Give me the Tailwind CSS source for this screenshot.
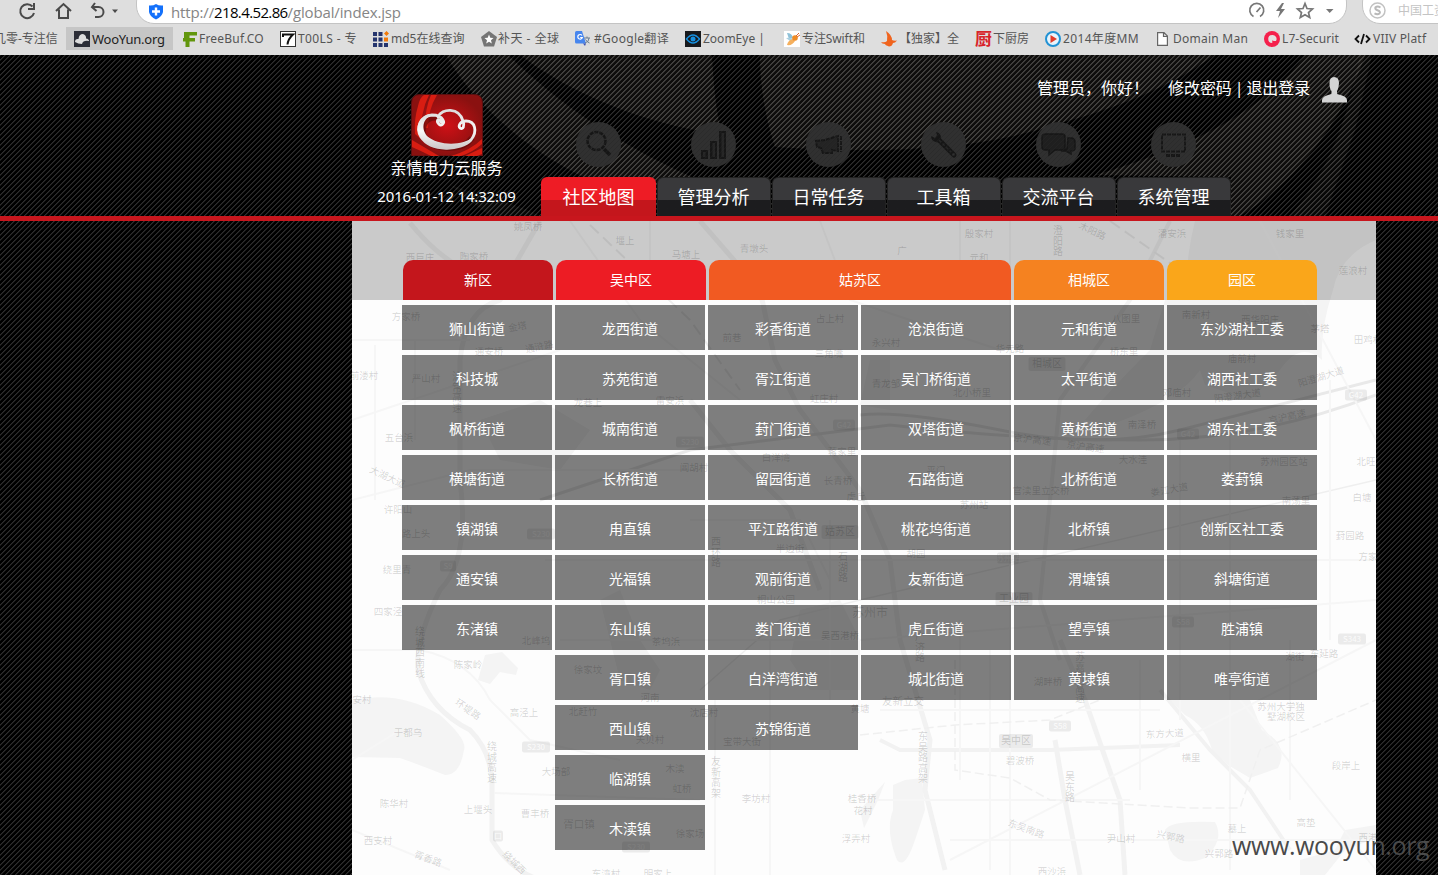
<!DOCTYPE html>
<html lang="zh-CN">
<head>
<meta charset="utf-8">
<title>亲情电力云服务</title>
<script src="https://cdn.jsdelivr.net/npm/@tailwindcss/browser@4"></script>
</head>
<body class="relative w-[1438px] h-[875px] overflow-hidden bg-black font-['Noto_Sans','Noto_Sans_CJK_SC',sans-serif] flex flex-col">

<!-- striped backdrop -->
<svg class="absolute left-0 top-[55px]" width="1438" height="820">
  <defs>
    <pattern id="stripe" width="5" height="5" patternUnits="userSpaceOnUse">
      <g fill="#2e2e2e" shape-rendering="crispEdges">
        <rect x="4" y="0" width="1" height="1"/><rect x="3" y="1" width="1" height="1"/><rect x="2" y="2" width="1" height="1"/><rect x="1" y="3" width="1" height="1"/><rect x="0" y="4" width="1" height="1"/>
      </g>
      <g fill="#1a1a1a" shape-rendering="crispEdges">
        <rect x="0" y="0" width="1" height="1"/><rect x="4" y="1" width="1" height="1"/><rect x="3" y="2" width="1" height="1"/><rect x="2" y="3" width="1" height="1"/><rect x="1" y="4" width="1" height="1"/>
      </g>
    </pattern>
    <pattern id="glow" width="5" height="5" patternUnits="userSpaceOnUse">
      <rect width="5" height="5" fill="#8a867c" fill-opacity=".1"/>
      <g fill="#b4b0a6" fill-opacity=".11" shape-rendering="crispEdges">
        <rect x="4" y="0" width="1" height="1"/><rect x="3" y="1" width="1" height="1"/><rect x="2" y="2" width="1" height="1"/><rect x="1" y="3" width="1" height="1"/><rect x="0" y="4" width="1" height="1"/>
        <rect x="0" y="0" width="1" height="1"/><rect x="4" y="1" width="1" height="1"/><rect x="3" y="2" width="1" height="1"/><rect x="2" y="3" width="1" height="1"/><rect x="1" y="4" width="1" height="1"/>
      </g>
    </pattern>
  </defs>
  <rect width="1438" height="820" fill="url(#stripe)"/>
  <g fill="url(#glow)">
    <path d="M446 0H508C560 50 620 90 692 122V160H690C560 130 480 60 446 0Z"/>
    <path d="M520 0H712C714 40 718 65 722 80L690 74C620 60 560 30 520 0Z"/>
    <path d="M760 0H1215C1180 25 1130 50 1060 68C990 92 900 100 775 92C765 62 760 30 760 0Z"/>
    <path d="M1095 120C1200 90 1270 50 1305 0H1365C1345 60 1300 125 1240 161H1231V122Z"/>
    <path d="M1372 0L1355 75L1325 161H1290C1335 110 1350 50 1360 0Z" opacity=".6"/>
    <path d="M450 130C480 140 520 150 540 161H490Z" opacity=".5"/>
  </g>
</svg>

<!-- browser chrome -->
<div class="relative h-[55px] shrink-0 bg-[#dedede] flex flex-col overflow-hidden">
  <div class="h-6 shrink-0 flex">
    <div class="w-[136px] shrink-0 flex">
      <svg width="136" height="24" fill="none" stroke="#4a4a4a" stroke-width="2">
        <path d="M32.5 6.5A7 7 0 1 0 34 13"/><path d="M34 3V9H28" />
        <path d="M56 11L63.500 4L71 11M59 9.500V18H68V9.500"/>
        <path d="M95 3L92 7L96.500 11M92 7H98.500A5 5 0 0 1 98.500 17H95"/>
        <path d="M112 9.500H118L115 13Z" fill="#4a4a4a" stroke="none"/>
      </svg>
    </div>
    <div class="-mt-4 h-10 w-[1211px] shrink-0 rounded-[18px] bg-white border border-[#c4c4c4] pt-4 flex items-center">
      <svg class="ml-[11px] shrink-0" width="16" height="18"><path d="M8 1Q11 3 15 2.500V9Q14 14 8 16.500Q2 14 1 9V2.500Q5 3 8 1Z" fill="#1471fb"/><path d="M8 4.500V12.500M4 8.500H12" stroke="#fff" stroke-width="2.400"/></svg>
      <div class="ml-[7px] w-[1077px] text-[15px] leading-6 tracking-[-0.14px] text-[#858585] whitespace-nowrap font-['Open_Sans',sans-serif]">http://<span class="text-black tracking-[-0.63px]">218.4.52.86</span>/global/index.jsp</div>
      <svg class="shrink-0" width="90" height="24" fill="none" stroke="#777" stroke-width="1.700">
        <path d="M5.500 16.500A7 7 0 1 1 12 16.500M8.500 12L12.500 7.500"/>
        <path d="M34 3L28 11H32L30 18L37 9H33L36 3Z" fill="#777" stroke="none"/>
        <path d="M57 3.500L59 8.500L64.500 9L60.500 12.500L61.700 17.500L57 14.700L52.300 17.500L53.500 12.500L49.500 9L55 8.500Z"/>
        <path d="M78 9H85.500L81.700 13Z" fill="#777" stroke="none"/>
      </svg>
    </div>
    <div class="ml-[15px] -mt-4 h-10 w-[120px] shrink-0 rounded-[18px] bg-white border border-[#c4c4c4] pt-4 flex items-center">
      <svg class="ml-1.5 -mt-1 shrink-0" width="17" height="17"><circle cx="8.500" cy="8.500" r="7.500" fill="none" stroke="#c2c2c2" stroke-width="1.500"/><path d="M11.500 5.500Q8.500 3.800 6.500 5.300Q5.500 7 8.500 8.200Q12 9.500 10.500 11.500Q8.500 13 5.500 11.300" fill="none" stroke="#b9b9b9" stroke-width="2"/></svg>
      <span class="ml-3 -mt-0.5 text-[12px] text-[#c4c4c4] whitespace-nowrap leading-5">中国工资</span>
    </div>
  </div>
  <div class="relative h-[31px] flex text-[12px] leading-[24px] pt-[3px] text-[#555] whitespace-nowrap">
    <div class="w-[66px] shrink-0 h-6"><div class="-ml-1.5">几零-专注信</div></div>
    <div class="w-[107px] shrink-0 h-[23px] bg-[#c6c6c6] flex items-center pl-2 text-[#222]">
      <svg class="mr-0.5 shrink-0" width="16" height="16"><rect width="16" height="16" fill="#2b2d36"/><path d="M1 11Q1 7.500 4.500 8Q5 3 9 3Q12.500 4 12 7.500Q15 8 15 10Q9 9 8 13Q4 13 1 11Z" fill="#ddd"/></svg><span class="text-[13px] tracking-[-0.25px]">WooYun.org</span></div>
    <div class="w-[99px] shrink-0 pl-2.5 flex h-[23px] items-center"><svg class="mr-0.5 shrink-0" width="14" height="16"><path d="M1 1H14V4.500H6.500V7H12V10.500H6.500V16H2.500V10.500H0V7H1Z" fill="#62960d"/></svg><span class="tracking-[0.2px]">FreeBuf.CO</span></div>
    <div class="w-[93px] shrink-0 pl-2 flex h-[23px] items-center"><svg class="mr-0.5 shrink-0" width="16" height="16"><rect x=".5" y=".5" width="15" height="15" fill="#fff" stroke="#333"/><path d="M3 6V3.500H13Q8 8 7.500 13.500" fill="none" stroke="#111" stroke-width="2"/></svg><span class="tracking-[0.4px]">T00LS - 专</span></div>
    <div class="w-[108px] shrink-0 pl-2 flex h-[23px] items-center"><svg class="mr-0.5 shrink-0" width="16" height="16"><g fill="#25356e"><path d="M0 1h4v4H0zM5.500 1h4v4h-4zM0 6.500h4v4H0zM5.500 6.500h4v4h-4zM0 12h4v4H0zM5.500 12h4v4h-4zM11 12h4v4h-4z"/></g><path d="M11 6.500h4v4h-4zM13.500 0l2.500 2.500-2.500 2.500L11 2.500z" fill="#f27a0a"/></svg>md5在线查询</div>
    <div class="w-[94px] shrink-0 pl-2 flex h-[23px] items-center"><svg class="mr-px shrink-0" width="16" height="16"><path d="M8 0L16 6L13 15.500H3L0 6Z" fill="#757575"/><path d="M8 3.500L9.300 6.700L12.500 7L10 9.200L10.800 12.500L8 10.800L5.200 12.500L6 9.200L3.500 7L6.700 6.700Z" fill="#fff"/></svg><span class="tracking-[0.5px]">补天 - 全球</span></div>
    <div class="w-[109px] shrink-0 pl-2 flex h-[23px] items-center"><svg class="mr-[3px] shrink-0" width="16" height="16"><path d="M6 4H15V14.500H10Z" fill="#dcdcdc"/><path d="M0 1.500Q0 0 1.500 0H7L11 12.500H1.500Q0 12.500 0 11Z" fill="#4786ee"/><path d="M7 4.500A2.300 2.300 0 1 0 7.300 6.500H5.200" fill="none" stroke="#fff" stroke-width="1.200"/><path d="M9 7H15M12 5.500V7M10 12Q14 11 14 7M10.500 8.500Q12 11 14.500 12" fill="none" stroke="#6b7f92"/><path d="M8 12.500h3L10 15z" fill="#3b4fb0"/></svg><span class="tracking-[0.3px]">#Google翻译</span></div>
    <div class="w-[100px] shrink-0 pl-[9px] flex h-[23px] items-center"><svg class="mr-0.5 shrink-0" width="16" height="16"><rect width="16" height="16" fill="#17191d"/><path d="M1.500 8Q8 0 14.500 8Q8 16 1.500 8Z" fill="none" stroke="#1790e0" stroke-width="1.500"/><circle cx="8" cy="8" r="2.500" fill="#1790e0"/></svg><span>ZoomEye |</span></div>
    <div class="w-[98px] shrink-0 pl-2 flex h-[23px] items-center"><svg class="mr-0.5 shrink-0" width="16" height="16"><rect width="16" height="16" fill="#fff"/><path d="M3 2Q8 2 9 7L5 8Z" fill="#8fc1d8"/><path d="M2 7Q6 6 9 8L6 10Z" fill="#a9cfe0"/><path d="M3 14Q4 9 9 8L11 10Q8 15 3 14Z" fill="#f5b05e"/><circle cx="11" cy="7" r="2.800" fill="#ef8b24"/><path d="M12 5L15 2M13 6L16 4" stroke="#e0662f"/></svg><span class="tracking-[-0.1px]">专注Swift和</span></div>
    <div class="w-[93px] shrink-0 pl-[7px] flex h-[23px] items-center"><svg class="mr-0.5 shrink-0" width="16" height="16"><path d="M5 0Q11 4 11 9Q13 10 16 9.500Q14 12 12 12Q11 15.500 8 15.500Q4 14 4 13Q1 13 0 11Q4 12 6 10Q7 5 5 0Z" fill="#f0641e"/></svg>【独家】全</div>
    <div class="w-[70px] shrink-0 pl-2 flex h-[23px] items-center"><span class="w-[17px] mr-px text-[17px] leading-4 font-bold text-[#d8232a] shrink-0">厨</span>下厨房</div>
    <div class="w-[111px] shrink-0 pl-2 flex h-[23px] items-center"><svg class="mr-0.5 shrink-0" width="16" height="16"><circle cx="8" cy="8" r="7" fill="#e8f4fc" stroke="#2292d4" stroke-width="2"/><path d="M5.500 4L12 8L5.500 12Z" fill="#e33c2a"/></svg><span class="tracking-[0.35px]">2014年度MM</span></div>
    <div class="w-[107px] shrink-0 pl-[9px] flex h-[23px] items-center"><svg class="mr-[5px] shrink-0" width="11" height="14"><path d="M.6.600H7L10.400 4V13.400H.6ZM6.500.600V4.500H10.400" fill="#fff" stroke="#666" stroke-width="1.200"/></svg><span class="tracking-[0.25px]">Domain Man</span></div>
    <div class="w-[91px] shrink-0 pl-[9px] flex h-[23px] items-center"><svg class="mr-0.5 shrink-0" width="16" height="16"><circle cx="8" cy="8" r="8" fill="#f5204c"/><path d="M8 4A4 4 0 1 0 8.500 12V10H12A4 4 0 0 0 8 4Z" fill="#e4dfe0"/><path d="M8.500 12V9L11.500 12Z" fill="#f5204c"/></svg><span class="tracking-[0.1px]">L7-Securit</span></div>
    <div class="w-[92px] shrink-0 pl-2 flex h-[23px] items-center"><svg class="mr-0.5 shrink-0" width="17" height="12" fill="none" stroke="#111" stroke-width="1.800"><path d="M5 2.500L1.500 6L5 9.500M12 2.500L15.500 6L12 9.500M10 1L7 11"/></svg><span class="tracking-[0.2px]">VIIV Platf</span></div>
  </div>
</div>

<!-- site header -->
<header class="relative h-[166px] shrink-0 border-b-[5px] border-[#c8161d]">
  <div class="w-[1024px] ml-[352px] h-[161px] flex text-white">
    <div class="w-[189px] shrink-0 flex flex-col items-center pt-[39px]">
      <svg width="72" height="62" viewBox="0 0 72 62">
        <defs><radialGradient id="lg"><stop offset="0" stop-color="#cf1016"/><stop offset="1" stop-color="#8a1110"/></radialGradient>
        <linearGradient id="silver" x2="0" y2="1"><stop offset="0" stop-color="#dcdcdc"/><stop offset=".5" stop-color="#f8f8f8"/><stop offset="1" stop-color="#cfcaca"/></linearGradient></defs>
        <path d="M.5 62V9Q.5 .5 9 .5H63Q71.500 .5 71.500 9V62Z" fill="url(#lg)" stroke="#5c0f0f"/>
        <path d="M7 12Q9 3 13 1H18Q9 18 10 45L4 40Q3 25 7 12ZM20 1H26Q17 16 17 34H14Q14 14 20 1ZM1 46Q18 56 28 62H20Q8 56 1 53ZM40 62Q60 56 71 45V50Q62 58 50 62ZM54 62L71 54V60L66 62Z" fill="#d81d12"/>
        <path d="M29 24C12 20 8 38 15 46C26 57 52 57 61 44" fill="none" stroke="#5a0a0a" stroke-width="6" opacity=".6"/>
        <path d="M30 28C28 24 25 26 27 29C30 34 34 29 32 26C30 22 26 21 21 21C10 22 4 34 10 43C20 58 50 57 60 46C67 37 64 27 55 27C49 27 47 32 49 34C52 36 54 32 52 27C48 13 31 14 27 23" fill="none" stroke="url(#silver)" stroke-width="2.800" stroke-linecap="round"/>
        <path d="M23 20C8 19 2 34 11 44C24 58 52 57 62 43C52 52 27 52 16 42C9 33 13 23 23 20Z" fill="url(#silver)"/>
      </svg>
      <div class="text-[16px] leading-6">亲情电力云服务</div>
      <div class="mt-[4px] text-[15px] leading-6 tracking-[-0.18px]">2016-01-12 14:32:09</div>
    </div>
    <div class="flex-1 flex flex-col">
      <div class="h-[67px] shrink-0 flex items-center text-[16px] whitespace-nowrap pl-[496px]">
        <span class="w-[131px] shrink-0 -mt-0.5">管理员，你好！</span><span class="w-[153px] shrink-0 -mt-0.5 tracking-[-0.05px] [word-spacing:-1.2px]">修改密码 | 退出登录</span>
        <svg class="mt-[3px] shrink-0" width="27" height="26"><path d="M13 0Q18 0 18 6Q17.500 12 16 14V17Q26 19 26 23V25.500H1V23Q1 19 10.500 17V14Q8.500 12 8.500 6Q8.500 0 13 0Z" fill="#d4d4d4"/></svg>
      </div>
      <nav class="flex text-[18px]">
        <div class="w-[115px] flex flex-col items-center">
          <svg width="45" height="45" fill="none" stroke="#161616" stroke-width="3.500"><circle cx="22.500" cy="22.500" r="22.500" fill="#303030" stroke="none"/><circle cx="20.500" cy="19" r="9" stroke-width="2.500" stroke-dasharray="4 1"/><path d="M28 27L34 33"/><circle cx="22.500" cy="22.500" r="22.500" fill="url(#stripe)" stroke="none" opacity=".25"/></svg>
          <div class="mt-[10px] h-[39px] w-[115px] rounded-t-[6px] bg-linear-to-b from-[#ee1c25] from-58% to-[#c4161c] to-58% flex items-center justify-center pt-0.5">社区地图</div>
        </div>
        <div class="w-[115px] flex flex-col items-center">
          <svg width="45" height="45"><circle cx="22.500" cy="22.500" r="22.500" fill="#303030"/><path d="M10 28h7v9h-7zM19 19h7v18h-7zM28 9h7v28h-7z" fill="#161616"/><path d="M12 30h2.500v5H12zM21.500 21H24v14h-2.500zM30.500 11H33v24h-2.500z" fill="#262626"/><circle cx="22.500" cy="22.500" r="22.500" fill="url(#stripe)" opacity=".25"/></svg>
          <div class="mt-[10px] h-[39px] w-[114px] rounded-t-[6px] border-t border-x border-[#222] bg-linear-to-b from-[#39393b] from-58% to-[#1c1c1e] to-58% bg-origin-border flex items-center justify-center pt-px">管理分析</div>
        </div>
        <div class="w-[115px] flex flex-col items-center">
          <svg width="45" height="45"><circle cx="22.500" cy="22.500" r="22.500" fill="#303030"/><path d="M10 19L19 18L32 14V29L26 28V31H17L15 26L11 25Z" fill="#242424" stroke="#161616" stroke-width="2" stroke-dasharray="4 1"/><path d="M35 14V30" stroke="#161616" stroke-width="2" stroke-dasharray="4 1"/><circle cx="22.500" cy="22.500" r="22.500" fill="url(#stripe)" opacity=".25"/></svg>
          <div class="mt-[10px] h-[39px] w-[114px] rounded-t-[6px] border-t border-x border-[#222] bg-linear-to-b from-[#39393b] from-58% to-[#1c1c1e] to-58% bg-origin-border flex items-center justify-center pt-px">日常任务</div>
        </div>
        <div class="w-[115px] flex flex-col items-center">
          <svg width="45" height="45"><circle cx="22.500" cy="22.500" r="22.500" fill="#303030"/><path d="M17 17L33 33" stroke="#161616" stroke-width="5" stroke-linecap="round"/><path d="M15 10Q20 11 20 16T15 20Q10 19 10 14L14 16L16 13Z" fill="#161616"/><path d="M18 18L30 30" stroke="#262626" stroke-width="1.500" stroke-dasharray="3 2"/><circle cx="32.500" cy="32.500" r="1.300" fill="#303030"/><circle cx="22.500" cy="22.500" r="22.500" fill="url(#stripe)" opacity=".25"/></svg>
          <div class="mt-[10px] h-[39px] w-[114px] rounded-t-[6px] border-t border-x border-[#222] bg-linear-to-b from-[#39393b] from-58% to-[#1c1c1e] to-58% bg-origin-border flex items-center justify-center pt-px">工具箱</div>
        </div>
        <div class="w-[115px] flex flex-col items-center">
          <svg width="45" height="45"><circle cx="22.500" cy="22.500" r="22.500" fill="#303030"/><path d="M10 12H26Q29 12 29 15V25Q29 28 26 28H19L13 33V28H10Q6 28 6 25V15Q6 12 10 12ZM32 16H36Q39 17 39 20V26Q39 29 35 29V32L30 29H25L31 27Z" fill="#1f1f1f" stroke="#161616" stroke-width="1.500"/><circle cx="22.500" cy="22.500" r="22.500" fill="url(#stripe)" opacity=".25"/></svg>
          <div class="mt-[10px] h-[39px] w-[114px] rounded-t-[6px] border-t border-x border-[#222] bg-linear-to-b from-[#39393b] from-58% to-[#1c1c1e] to-58% bg-origin-border flex items-center justify-center pt-px">交流平台</div>
        </div>
        <div class="w-[115px] flex flex-col items-center">
          <svg width="45" height="45"><circle cx="22.500" cy="22.500" r="22.500" fill="#303030"/><rect x="11" y="12.500" width="23" height="17" fill="none" stroke="#161616" stroke-width="2" stroke-dasharray="4 1"/><path d="M15 33.500H30" stroke="#161616" stroke-width="3" stroke-dasharray="4 1"/><circle cx="22.500" cy="22.500" r="22.500" fill="url(#stripe)" opacity=".25"/></svg>
          <div class="mt-[10px] h-[39px] w-[114px] rounded-t-[6px] border-t border-x border-[#222] bg-linear-to-b from-[#39393b] from-58% to-[#1c1c1e] to-58% bg-origin-border flex items-center justify-center pt-px">系统管理</div>
        </div>
      </nav>
    </div>
  </div>
</header>

<!-- map with district table -->
<main class="relative ml-[352px] w-[1024px] h-[654px] shrink-0 bg-[#fdfdfd] overflow-hidden">
  <svg class="absolute inset-0" width="1024" height="654" viewBox="352 221 1024 654">
    <g fill="#f4f4f4">
      <path d="M1195 221H1376V240Q1340 255 1333 290Q1320 330 1322 360Q1300 340 1280 370L1250 400L1205 385L1190 340Q1180 280 1195 221Z"/>
      <path d="M1165 300L1150 350Q1110 390 1085 420L1110 425Q1180 400 1200 370V300Z"/>
      <path d="M352 700Q400 690 440 715Q468 740 464 750Q460 775 445 775Q420 765 400 758L352 757Z"/>
      <path d="M485 655L502 652L518 668L516 675L500 672L490 684L478 680Z"/>
      <path d="M1170 700L1185 715Q1205 725 1212 750L1228 765L1250 778L1278 768Q1290 745 1262 730L1250 700Z"/>
      <path d="M1165 830Q1170 820 1215 822Q1225 840 1205 858Q1180 868 1170 850Z"/>
      <path d="M893 785L905 780L922 778L925 810L915 840Q905 870 897 860Q885 830 893 810ZM860 810L885 782L878 800L864 828Z"/>
      <path d="M860 690V640L840 600L800 610L790 660L810 690Z"/>
      <path d="M600 600L620 590L640 640L660 670L650 690L620 680Z"/>
      <path d="M480 420L540 400L590 430L560 470L500 460ZM870 360L890 360L890 410L860 405Z"/>
      <path d="M1300 860L1335 850L1345 830L1376 825V838L1345 850L1325 875H1300Z"/>
    </g>
    <g fill="none" stroke="#f2f2f2" stroke-width="5">
      <path d="M410 223Q440 260 475 275T500 300Q465 310 460 360V480Q470 560 440 590Q415 640 418 670Q430 710 470 730Q490 750 492 780V840Q510 870 540 880"/>
      <path d="M540 221L500 290M700 221L760 290L775 360L800 410L860 490L890 560L900 640L930 740L925 790L945 870"/>
      <path d="M690 400L730 450L790 510L820 590"/>
      <path d="M1060 640L1085 700L1120 800L1125 875M1055 740L1065 800L1080 875"/>
      <path d="M880 740L900 750H1050L1180 745M1160 690L1210 750L1250 790L1290 850" stroke-width="4"/>
      <path d="M1170 221L1130 300L1060 400L1040 600L1060 660" stroke-width="4"/>
    </g>
    <g fill="none" stroke="#e9e9e9" stroke-width="3">
      <path d="M1376 380Q1260 410 1180 430T1000 430T860 415"/>
      <path d="M1376 395Q1260 440 1140 440T890 425L690 450L540 500"/>
      <path d="M700 690L780 620L860 600L1376 480" stroke="#efefef" stroke-width="1.500"/>
    </g>
    <g fill="none" stroke="#f6f6f6" stroke-width="2">
      <path d="M352 340H470M375 345V500M415 340V440M352 650H420Q470 660 490 700L530 740L620 760M494 793L700 800M352 830L450 870M352 760L400 730M570 221L640 320L740 400M650 221V300M352 500L470 470H700M690 520H800L830 580M545 560H1376M560 640H860L1376 600M715 700V875M770 640V875M830 520V700M960 620V780M990 650V870M1140 660V790M1180 440V720M1230 430V870M1290 640V800M1330 380V640M950 860L1376 640M1240 700L1376 870M352 420L560 350M960 221V300M820 221L850 300L1000 350M1010 221V875M870 800H1130M880 710H1160M950 840H1376M1260 221L1376 440"/>
      <path d="M860 735L955 725L1050 720L1100 700M955 660V770L1010 778L1050 800L1190 808H1240L1260 750L1376 700" stroke="#f0f0f0" stroke-width="1.500" stroke-dasharray="9 4"/>
      <path d="M590 225L690 320L740 390M1110 221L1180 270L1240 300" stroke="#ededed" stroke-dasharray="12 6"/>
    </g>
    <g id="labels" fill="#000" fill-opacity=".17" font-family="'Noto Sans CJK SC',sans-serif" text-anchor="middle"></g>
  </svg>
  <div class="relative h-[79px] bg-black/20 pl-[51px] pt-[39px] flex gap-[3px] text-[14px] text-white leading-[40px] text-center">
    <div class="w-[150px] h-10 rounded-t-[10px] bg-[#c4161c]">新区</div>
    <div class="w-[150px] h-10 rounded-t-[10px] bg-[#ed1c24]">吴中区</div>
    <div class="w-[302px] h-10 rounded-t-[10px] bg-[#f15a22]">姑苏区</div>
    <div class="w-[150px] h-10 rounded-t-[10px] bg-[#f58220]">相城区</div>
    <div class="w-[150px] h-10 rounded-t-[10px] bg-[#faa61a]">园区</div>
  </div>
  <div id="grid" class="relative pl-[50px] pt-[5px] flex gap-[3px] items-start text-[14px] text-white"></div>
</main>

<div class="absolute left-[1232px] top-[828px] text-[25px] leading-[34px] tracking-[-0.4px] text-[#4a4a4a] font-['Open_Sans',sans-serif]">www.wooyun.org</div>

<script>
const columns = [
  ['狮山街道','科技城','枫桥街道','横塘街道','镇湖镇','通安镇','东渚镇'],
  ['龙西街道','苏苑街道','城南街道','长桥街道','甪直镇','光福镇','东山镇','胥口镇','西山镇','临湖镇','木渎镇'],
  ['彩香街道','胥江街道','葑门街道','留园街道','平江路街道','观前街道','娄门街道','白洋湾街道','苏锦街道'],
  ['沧浪街道','吴门桥街道','双塔街道','石路街道','桃花坞街道','友新街道','虎丘街道','城北街道'],
  ['元和街道','太平街道','黄桥街道','北桥街道','北桥镇','渭塘镇','望亭镇','黄埭镇'],
  ['东沙湖社工委','湖西社工委','湖东社工委','娄葑镇','创新区社工委','斜塘街道','胜浦镇','唯亭街道']
];
document.getElementById('grid').innerHTML = columns.map(c =>
  '<div class="w-[150px] flex flex-col gap-[5px]">' + c.map(t =>
    '<div class="h-[45px] bg-black/50 flex items-center justify-center pt-0.5">' + t + '</div>').join('') + '</div>').join('');

// place names: text, centre x, baseline y, rotation, size
const places = [
  ['姚凤桥',528,230],['堰上',625,244],['西巨庄',420,261],['陶家桥',474,260],['马塘上',686,258],['青墩头',754,252],['殷家村',979,237],['广',902,254],
  ['元和',979,261],['潘安浜',1172,237],['钱家里',1290,237],['莲浪村',1353,274],['木阳路',1091,234,25],['方家桥',406,320],['金塔',518,330,-10],
  ['通安桥',489,355],['通浒路',540,350,-12],['前溇村',364,379],['严山村',426,382],['龙巷上',588,406],['雷安浜',670,404],['五台浜',399,441],
  ['占上村',830,322],['前巷',732,341],['三角嘴',829,357],['永兴村',886,346],['华元路',1010,352],['虹庄村',824,402],['青龙邹',886,387],['北小桥里',972,396],
  ['八图里',1126,322],['南新村',1196,318],['西华阳庄',1260,323],['茅塔',1320,332],['田鸡村',1368,343],['桥东里',1124,355],['庙前村',1242,362],['邓庙村',1177,396],
  ['阳澄湖大道',1238,399,-8],['阳澄湖大道',1322,380,-17],['京沪高速',1288,420,-12],['京沪高速',1032,443,6],['京沪高速',1085,450,8],['南泽桥',1142,428],['大水洼',1133,463],
  ['苏州园区站',1284,465],['北旺',1366,465],['官渎里立交桥',1041,494],['娄江大道',1170,493,-10],['白塘',1362,501],['葑园路',1350,539],['方家',1368,560],
  ['大湖大道',386,480,25],['许阳山',398,513],['路上头',416,537],['绕里青',397,573],['四家泾',388,615],['北峰坞',536,644],['茶坞浜',666,645],['徐家坟',588,673],
  ['白洋湾',776,461],['蒋家里',842,455],['长青桥',838,484],['虎丘',856,500],['平门',936,474],['苏州站',974,508],['阊胡村',694,471],['半边街',790,552],['桐山公园',776,603],['苏州市',870,617,0,12],['吴西港桥',840,639],['胡园',916,557],
  ['陈家岭',468,668],['安村',362,703],['高泾上',524,716],['北赶竹',583,715],['沈店村',704,716],['河南',650,701],['天贝村',650,743],['于都乌',408,736],['大场部',556,775],['木渎',675,772],['虹桥',682,792],
  ['陈华村',394,807],['上堰头',478,813],['曹丰桥',535,817],['西支村',378,844],['胥口镇',579,828,0,10.5],['李坊村',756,802],['徐家场',690,837],['东湾村',606,877],['明家上',658,877],
  ['胥香路',427,862,20],['环堤路',466,712,35],['绕城西',512,865,45],['桂香桥',862,802],['花村',863,814],['浮弄村',856,842],['宝带大街',742,745],
  ['友新立交',903,705,0,10.5],['碧波桥',1020,764],['东方大道',1165,737,-3],['横里',1191,761],['苏州大学独',1281,710],['墅湖校区',1286,720],['段岸上',1346,769],['高垫',1306,826],['西港',1368,841],
  ['墓上',1237,832],['尹山村',1121,842],['东吴南路',1025,832,20],['兴郭路',1170,840,12],['兴郭路',1219,857],['西沙浜',1052,875],['湖街',1295,660],['东延路',1324,657],['湖畔桥',1048,685],['南荡里',1296,504],['黄塘',860,712]
];
const badges = [[1356,395,'G42'],[1047,364,'相城区',11],[1188,434,'G42'],[844,425,'G42'],[690,442,'S230'],[840,532,'姑苏区',11],[1008,558,'苏州站'],[536,747,'S230'],[498,836,'口'],[1016,741,'吴中区',10],[1060,726,'S58'],[636,847,'S230'],[1352,639,'S343'],[541,534,'S230'],[448,566,'S9'],[1014,599,'工业园',11],[1183,622,'S58']];
const vertical = [['沪常高速',457,380],['绕城西南线',420,635],['绕城高速',492,750],['西环路',716,545],['石湖路',843,560],['东吴路高架',923,740],['苏嘉杭高速',1080,660],['澄阳路',1058,234],['友新高架',716,765],['吴东路',1070,780],['广济路',920,640]];
const text = (x, y, size, t, extra = '') => `<text x="${x}" y="${y}" font-size="${size}"${extra}>${t}</text>`;
let s = places.map(([t,x,y,r,z]) => text(x, y, z || 9.5, t, r ? ` transform="rotate(${r} ${x} ${y})"` : '')).join('');
s += vertical.map(([t,x,y]) => [...t].map((c,i) => text(x, y + i*10.5, 10, c)).join('')).join('');
s += badges.map(([x,y,t,z]) => { const w = t.length*(z || 6) + 4, h = z ? 14 : 11; return `<rect x="${x-w/2}" y="${y-h/2}" width="${w}" height="${h}" rx="2" fill-opacity=".07"/>` + text(x, y + 3, z ? 10 : 8, t, z ? '' : ' fill="#fff" fill-opacity=".85"'); }).join('');
document.getElementById('labels').innerHTML = s;
</script>
</body>
</html>
